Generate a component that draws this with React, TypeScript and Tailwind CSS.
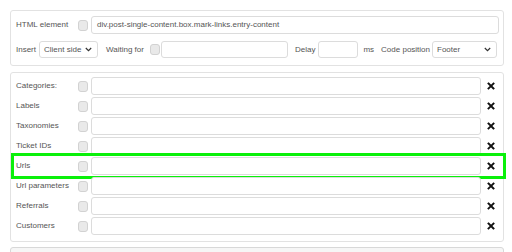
const fuente = { fontFamily: '"Liberation Sans", Arial, sans-serif' };

function Casilla() {
  return <span className="block h-[11px] w-[10px] shrink-0 rounded-[3px] border border-[#d2d2d2] bg-[#e9e9e9]" />;
}

function Campo({ className = "", valor = "" }: { className?: string; valor?: string }) {
  return (
    <div
      className={`flex items-center rounded-[3px] border border-[#dcdcdc] bg-white pl-[5px] text-[8px] text-[#555] ${className}`}
    >
      {valor}
    </div>
  );
}

function Selector({ valor, className = "" }: { valor: string; className?: string }) {
  return (
    <div
      className={`flex h-[17px] items-center justify-between rounded-[3px] border border-[#dcdcdc] bg-white pl-[4px] pr-[5px] text-[8px] text-[#555] ${className}`}
    >
      <span>{valor}</span>
      <svg width="7" height="5" viewBox="0 0 7 5" aria-hidden="true">
        <path d="M0.8 1 L3.5 3.6 L6.2 1" fill="none" stroke="#333" strokeWidth="1.2" />
      </svg>
    </div>
  );
}

function Cruz() {
  return (
    <svg width="8" height="8" viewBox="0 0 8 8" aria-hidden="true">
      <path d="M1.5 1.5 L6.5 6.5 M6.5 1.5 L1.5 6.5" stroke="#111" strokeWidth="1.9" strokeLinecap="square" />
    </svg>
  );
}

const filtros = [
  "Categories:",
  "Labels",
  "Taxonomies",
  "Ticket IDs",
  "Urls",
  "Url parameters",
  "Referrals",
  "Customers",
];

export default function App() {
  return (
    <div className="h-[252px] w-[512px] overflow-hidden bg-white pt-[10px] pl-[10px]" style={fuente}>
      {/* bloque superior */}
      <section className="w-[494px] rounded-[3px] border border-[#e2e2e2] pt-[5px] pb-[7px] pl-[5px] pr-[4px]">
        <div className="flex items-center">
          <span className="w-[62px] text-[8px] text-[#555]">HTML element</span>
          <Casilla />
          <Campo className="ml-[3px] h-[18px] w-[408px]" valor="div.post-single-content.box.mark-links.entry-content" />
        </div>
        <div className="mt-[7px] flex items-center text-[8px] text-[#555]">
          <span>Insert</span>
          <Selector valor="Client side" className="ml-[3px] w-[59px]" />
          <span className="ml-[8px]">Waiting for</span>
          <span className="ml-[6px]">
            <Casilla />
          </span>
          <Campo className="ml-[1px] h-[17px] w-[127px]" />
          <span className="ml-[7px]">Delay</span>
          <Campo className="ml-[3px] h-[17px] w-[40px]" />
          <span className="ml-[5px]">ms</span>
          <span className="ml-[7px]">Code position</span>
          <Selector valor="Footer" className="ml-[2px] w-[65px]" />
        </div>
      </section>

      {/* filtros */}
      <section className="mt-[6px] w-[494px] rounded-[3px] border border-[#e2e2e2] pt-[4px] pb-[6px] pl-[5px]">
        <div className="flex flex-col gap-[2px]">
          {filtros.map((nombre) => (
            <div key={nombre} className="relative flex h-[18px] items-center">
              <span className="w-[62px] text-[8px] text-[#555]">{nombre}</span>
              <Casilla />
              <Campo className="ml-[3px] h-[18px] w-[390px]" />
              <span className="flex w-[20px] justify-center">
                <Cruz />
              </span>
              {nombre === "Urls" && (
                <span className="pointer-events-none absolute -top-[4px] -left-[5px] h-[26px] w-[495px] border-[3px] border-[#0af00a]" />
              )}
            </div>
          ))}
        </div>
      </section>

      <section className="mt-[5px] h-[20px] w-[494px] rounded-t-[3px] border border-[#d8d8d8] bg-[#f6f6f6]" />
    </div>
  );
}
